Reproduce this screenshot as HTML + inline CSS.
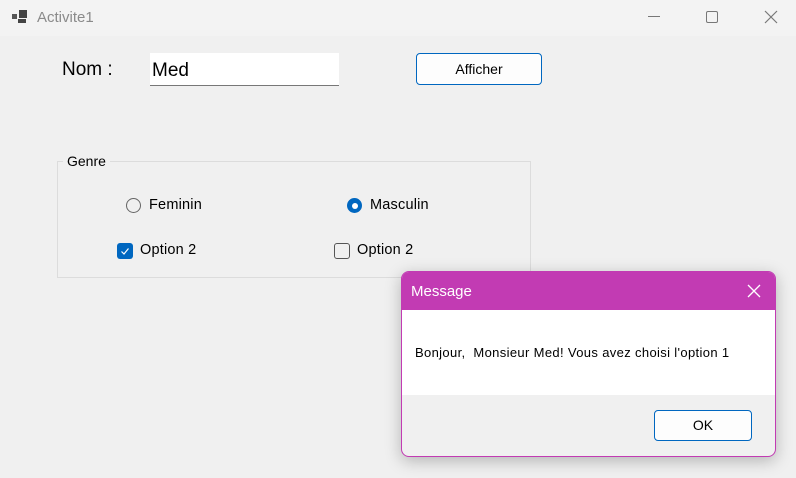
<!DOCTYPE html>
<html><head><meta charset="utf-8"><style>
*{margin:0;padding:0;box-sizing:border-box}
body{width:796px;height:478px;overflow:hidden;background:#f0f0f0;font-family:"Liberation Sans",sans-serif;position:relative;color:#000}
.abs{position:absolute}
.title{left:0;top:0;width:796px;height:36px;background:#f3f3f3}
.t14{font-size:14.5px;letter-spacing:0.2px}
</style></head><body>
<div class="abs title"></div>
<svg class="abs" style="left:12px;top:10px" width="16" height="14"><rect x="0" y="4" width="5" height="5" fill="#555"/><rect x="7" y="0" width="8" height="8" fill="#444"/><rect x="6" y="9" width="8" height="4" fill="#444"/></svg>
<div class="abs" style="left:37px;top:9px;font-size:15px;color:#8a8a8a">Activite1</div>
<div class="abs" style="left:648px;top:16px;width:12px;height:1px;background:#777"></div>
<div class="abs" style="left:706px;top:11px;width:12px;height:12px;border:1px solid #777;border-radius:2px"></div>
<svg class="abs" style="left:764px;top:10px" width="14" height="14"><path d="M1 1L13 13M13 1L1 13" stroke="#777" stroke-width="1.2"/></svg>

<div class="abs" style="left:62px;top:59px;font-size:19px">Nom :</div>
<div class="abs" style="left:150px;top:53px;width:189px;height:33px;background:#fff;border-bottom:1px solid #777"></div>
<div class="abs" style="left:152px;top:60px;font-size:19px">Med</div>
<div class="abs" style="left:416px;top:53px;width:126px;height:32px;background:#fdfdfd;border:1px solid #0067c0;border-radius:4px;font-size:14px;text-align:center;line-height:30px">Afficher</div>

<div class="abs" style="left:57px;top:161px;width:474px;height:117px;border:1px solid #dcdcdc"></div>
<div class="abs" style="left:63px;top:153px;padding:0 4px;background:#f0f0f0;font-size:14px">Genre</div>
<div class="abs" style="left:126px;top:198px;width:15px;height:15px;border:1px solid #666;border-radius:50%"></div>
<div class="abs t14" style="left:149px;top:197px">Feminin</div>
<div class="abs" style="left:347px;top:198px;width:15px;height:15px;background:#0067c0;border-radius:50%"><div style="margin:4.5px;width:6px;height:6px;background:#fff;border-radius:50%"></div></div>
<div class="abs t14" style="left:370px;top:197px">Masculin</div>
<div class="abs" style="left:117px;top:243px;width:16px;height:16px;background:#0067c0;border-radius:3px"><svg width="16" height="16"><path d="M4.5 8.5L7 11L11.5 5.5" stroke="#fff" stroke-width="1.2" fill="none"/></svg></div>
<div class="abs t14" style="left:140px;top:242px">Option 2</div>
<div class="abs" style="left:334px;top:243px;width:16px;height:16px;border:1px solid #555;border-radius:3px"></div>
<div class="abs t14" style="left:357px;top:242px">Option 2</div>

<div class="abs" style="left:401px;top:271px;width:375px;height:186px;border:1px solid #c23bb3;border-radius:8px;overflow:hidden;background:#f0f0f0;box-shadow:0 4px 16px rgba(0,0,0,0.25)">
 <div style="height:38px;background:#c23bb3;color:#fff;font-size:15px;padding:11px 0 0 9px">Message</div>
 <svg class="abs" style="left:345px;top:12px" width="14" height="14"><path d="M1 1L13 13M13 1L1 13" stroke="#fff" stroke-width="1.3"/></svg>
 <div style="height:85px;background:#fff;font-size:13px;letter-spacing:0.35px;padding:35px 0 0 13px;white-space:nowrap">Bonjour,&nbsp; Monsieur Med! Vous avez choisi l'option 1</div>
 <div class="abs" style="left:252px;top:138px;width:98px;height:31px;background:#fdfdfd;border:1px solid #0067c0;border-radius:4px;font-size:14px;text-align:center;line-height:29px">OK</div>
</div>
</body></html>
